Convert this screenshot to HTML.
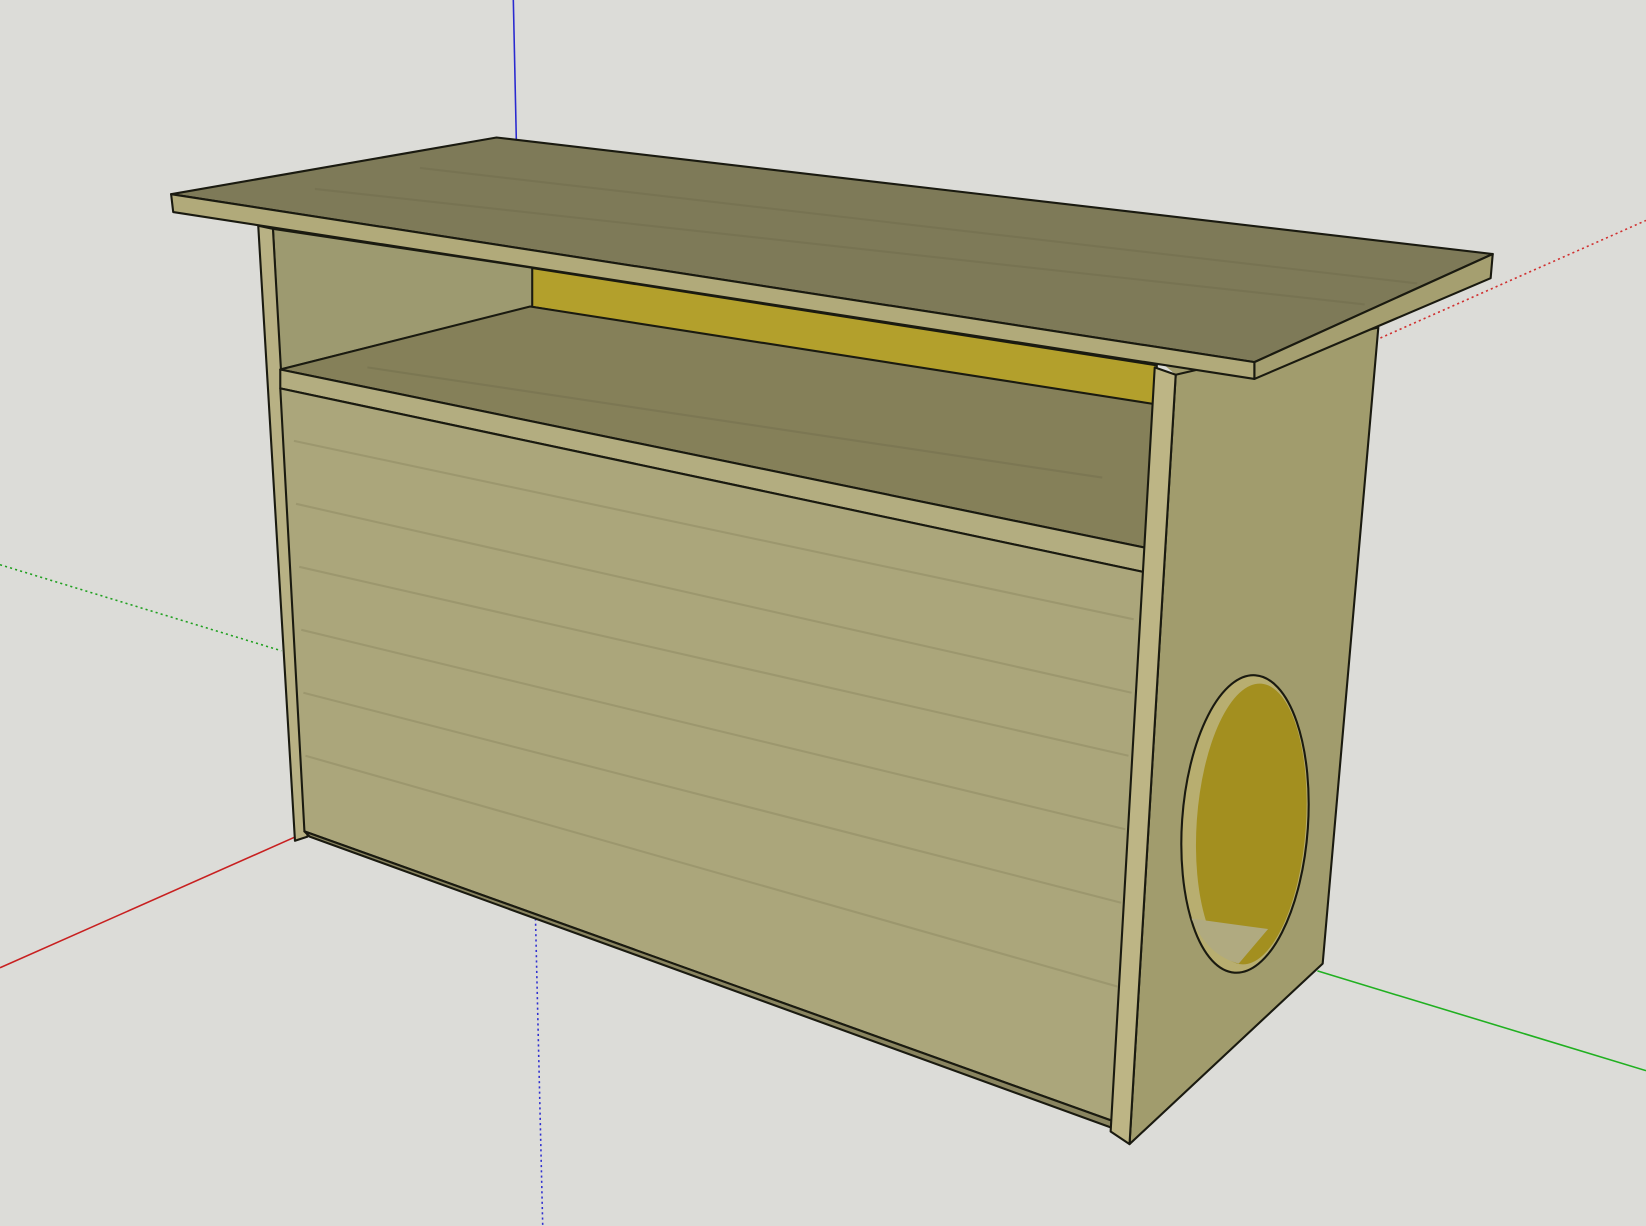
<!DOCTYPE html>
<html><head><meta charset="utf-8"><style>
html,body{margin:0;padding:0;background:#dcdcd8;}
svg{display:block;}
</style></head><body>
<svg width="1646" height="1226" viewBox="0 0 1568 1168" preserveAspectRatio="none" xmlns="http://www.w3.org/2000/svg">
<rect width="1568" height="1168" fill="#dcdcd8"/>
<!-- axes -->
<line x1="489" y1="0" x2="492" y2="140" stroke="#2a2ad0" stroke-width="1.5"/>
<line x1="510" y1="870" x2="517" y2="1168" stroke="#3030d0" stroke-width="1.5" stroke-dasharray="2,3"/>
<line x1="1315" y1="322" x2="1568" y2="210" stroke="#d03030" stroke-width="1.5" stroke-dasharray="2,3"/>
<line x1="0" y1="922" x2="282" y2="797" stroke="#c82020" stroke-width="1.5"/>
<line x1="0" y1="538" x2="268" y2="620" stroke="#20a020" stroke-width="1.5" stroke-dasharray="2,3"/>
<line x1="1255" y1="925" x2="1568" y2="1020" stroke="#20b020" stroke-width="1.5"/>
<g stroke="#1a1a10" stroke-width="2" stroke-linejoin="round">
<!-- back wall yellow -->
<polygon points="505,255 1102,348 1100,392 505,292" fill="#b3a02c"/>
<!-- left inner face -->
<polygon points="260,218 507,255 507,292 267,352" fill="#9d9a70"/>
<!-- left panel edge -->
<polygon points="246,215 260,218 293,797 281,801" fill="#b8b184"/>
<!-- shelf top -->
<polygon points="267,352 505,292 1100,385 1092,522" fill="#858059"/>
<!-- shelf front edge -->
<polygon points="267,352 1092,522 1090,545 267,370" fill="#b3ad80"/>
<!-- front panel -->
<polygon points="267,370 1090,545 1060,1068 290,792" fill="#aba67b"/>
<polygon points="290,792 1060,1068 1058,1074 295,797" fill="#8a8560"/>
<!-- right panel side face -->
<polygon points="1100,340 1313,300 1260,918 1076,1090 1120,357" fill="#a19c6d" stroke="none"/>
<polygon points="1120,357 1313,312 1260,918 1076,1090" fill="#a19c6d"/>
<!-- right panel front edge -->
<polygon points="1100,350 1120,357 1076,1090 1058,1078" fill="#bdb585"/>
<!-- hole -->
<ellipse cx="1186" cy="785" rx="60" ry="142" transform="rotate(4 1186 785)" fill="#b8ae70"/>
<ellipse cx="1192" cy="785" rx="52" ry="134" transform="rotate(4 1192 785)" fill="#a38f1f" stroke="none"/>
<path d="M1135,875 Q1170,880 1208,885 L1180,918 Q1150,910 1135,875 Z" fill="#b0aa80" stroke="none"/>
<!-- top board -->
<polygon points="163,185 473,131 1422,242 1195,345" fill="#7e7a58"/>
<polygon points="163,185 1195,345 1195,361 165,202" fill="#b1aa7a"/>
<polygon points="1195,345 1422,242 1420,265 1195,361" fill="#a59f70"/>
</g>
<!-- faint grain -->
<g stroke="#8f8a62" stroke-width="2" opacity="0.5" fill="none">
<path d="M280,420 L1080,590"/><path d="M282,480 L1078,660"/><path d="M285,540 L1075,720"/>
<path d="M287,600 L1072,790"/><path d="M289,660 L1068,860"/><path d="M291,720 L1065,940"/>
</g>
<g stroke="#6e6a4a" stroke-width="2" opacity="0.4" fill="none">
<path d="M300,180 L1300,290"/><path d="M400,160 L1350,270"/><path d="M350,350 L1050,455"/>
</g>
</svg>
</body></html>
